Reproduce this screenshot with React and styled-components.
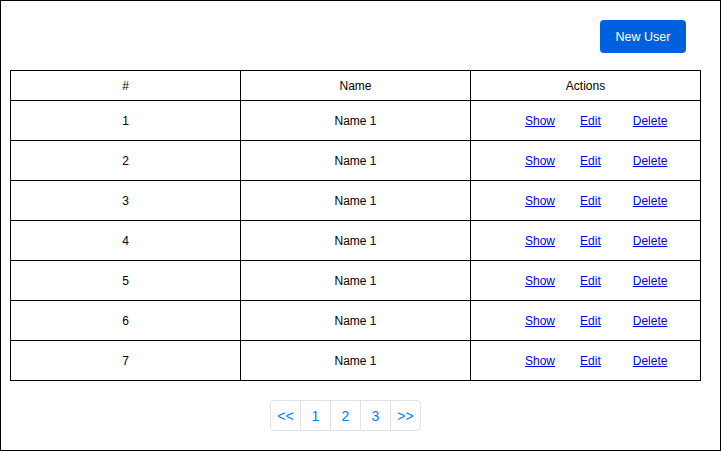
import React from "react";
import styled, { createGlobalStyle } from "styled-components";

const Global = createGlobalStyle`
  html, body { margin: 0; padding: 0; background: #fff; }
  body { font-family: "Liberation Sans", Arial, Helvetica, sans-serif; }
`;

const Frame = styled.div`
  width: 721px;
  height: 451px;
  box-sizing: border-box;
  border: 1px solid #000;
  display: flex;
  flex-direction: column;
`;

const Toolbar = styled.div`
  display: flex;
  justify-content: flex-end;
  padding: 19px 34px 17px 0;
`;

const PrimaryButton = styled.button`
  width: 86px;
  height: 33px;
  border: none;
  border-radius: 4px;
  background: #0160dd;
  color: #fff;
  font-family: inherit;
  font-size: 12.5px;
  padding: 0;
  cursor: pointer;
`;

const Table = styled.table`
  margin-left: 9px;
  width: 690px;
  border-collapse: collapse;
  table-layout: fixed;
  font-size: 12px;
  color: #000;
`;

const Col = styled.col`
  width: ${(p) => p.$w}px;
`;

const Th = styled.th`
  border: 1px solid #000;
  height: 29px;
  padding: 0;
  font-weight: normal;
  text-align: center;
`;

const Td = styled.td`
  border: 1px solid #000;
  height: 39px;
  padding: 0;
  text-align: center;
`;

const Actions = styled.div`
  display: flex;
  align-items: center;
  padding-left: 54px;
`;

const ActionLink = styled.a`
  color: #0000ee;
  text-decoration: underline;
  margin-right: ${(p) => p.$gap}px;
  cursor: pointer;
`;

const Pager = styled.ul`
  list-style: none;
  margin: 19px 0 0 269px;
  padding: 0;
  display: flex;
  width: fit-content;
  border: 1px solid #dee2e6;
  border-radius: 4px;
`;

const PageItem = styled.li`
  width: 29px;
  height: 29px;
  display: flex;
  align-items: center;
  justify-content: center;
  color: #007bff;
  font-size: 14px;
  border-left: ${(p) => (p.$first ? "none" : "1px solid #dee2e6")};
  cursor: pointer;
`;

const rows = [1, 2, 3, 4, 5, 6, 7];

export default function App() {
  return (
    <>
      <Global />
      <Frame>
        <Toolbar>
          <PrimaryButton>New User</PrimaryButton>
        </Toolbar>
        <Table>
          <colgroup>
            <Col $w={230} />
            <Col $w={230} />
            <Col $w={230} />
          </colgroup>
          <thead>
            <tr>
              <Th>#</Th>
              <Th>Name</Th>
              <Th>Actions</Th>
            </tr>
          </thead>
          <tbody>
            {rows.map((n) => (
              <tr key={n}>
                <Td>{n}</Td>
                <Td>Name 1</Td>
                <Td>
                  <Actions>
                    <ActionLink $gap={25}>Show</ActionLink>
                    <ActionLink $gap={32}>Edit</ActionLink>
                    <ActionLink $gap={0}>Delete</ActionLink>
                  </Actions>
                </Td>
              </tr>
            ))}
          </tbody>
        </Table>
        <Pager>
          {["<<", "1", "2", "3", ">>"].map((l, i) => (
            <PageItem key={l} $first={i === 0}>
              {l}
            </PageItem>
          ))}
        </Pager>
      </Frame>
    </>
  );
}
